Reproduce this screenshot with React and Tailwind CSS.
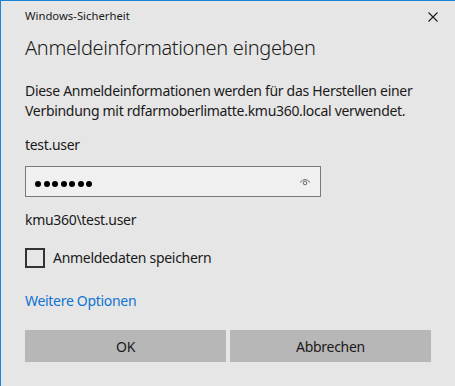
import React from 'react';

const font = { fontFamily: '"Noto Sans", "Open Sans", sans-serif' };

const CloseIcon = () => (
    <svg width="10" height="10" viewBox="0 0 10 10" className="block">
        <path d="M0.5 0.5 L9.5 9.5 M9.5 0.5 L0.5 9.5" stroke="#1a1a1a" strokeWidth="1.1" fill="none" />
    </svg>
);

const EyeIcon = () => (
    <svg width="12" height="8" viewBox="0 0 12 8" className="block">
        <path d="M1 4.5 Q6 -1.5 11 4.5" stroke="#6b6b6b" strokeWidth="1" fill="none" />
        <circle cx="6" cy="5" r="1.8" stroke="#6b6b6b" strokeWidth="1" fill="none" />
    </svg>
);

export default function App() {
    return (
        <div
            className="w-[455px] h-[386px] bg-[#e6e6e6] border-l border-t border-[#1883d7] text-[#1a1a1a] overflow-hidden"
            style={font}
        >
            {/* Titelleiste */}
            <div className="flex justify-between items-start pl-6 pr-[17px] h-[33px]">
                <span className="text-[11.3px] leading-[12px] mt-[9px]">Windows-Sicherheit</span>
                <span className="mt-[11px]">
                    <CloseIcon />
                </span>
            </div>

            <div className="pl-6 pr-6">
                <h1 className="text-[20px] leading-[28px] font-light tracking-[-0.35px]">Anmeldeinformationen eingeben</h1>

                <p className="text-[14px] leading-[20px] mt-[19px] tracking-[-0.3px]">
                    Diese Anmeldeinformationen werden für das Herstellen einer
                    <br />
                    Verbindung mit rdfarmoberlimatte.kmu360.local verwendet.
                </p>

                <div className="text-[14px] leading-[20px] mt-[14px] tracking-[-0.3px]">test.user</div>

                {/* Passwortfeld */}
                <div className="mt-[11px] w-[296px] h-[31px] border border-[#7a7a7a] bg-[#f0f0f0] flex items-center justify-between pl-[9px] pr-[9px]">
                    <div className="flex gap-[2.5px] mt-[5px]">
                        {Array.from({ length: 7 }, (_, i) => (
                            <span key={i} className="w-[6px] h-[6px] rounded-full bg-black block" />
                        ))}
                    </div>
                    <EyeIcon />
                </div>

                <div className="text-[14px] leading-[20px] mt-[13px] tracking-[-0.3px]">kmu360\test.user</div>

                <label className="flex items-center gap-2 mt-[18px]">
                    <span className="w-[20px] h-[20px] border-2 border-[#333333] block" />
                    <span className="text-[14px] leading-[20px] tracking-[-0.3px]">Anmeldedaten speichern</span>
                </label>

                <div className="text-[14px] leading-[20px] mt-[23px] text-[#0f73d2] tracking-[-0.3px]">Weitere Optionen</div>

                {/* Buttons */}
                <div className="flex gap-1 mt-[19px]">
                    <button className="w-[201px] h-[32px] bg-[#b7b7b7] text-[14px] tracking-[-0.3px]">OK</button>
                    <button className="w-[201px] h-[32px] bg-[#b7b7b7] text-[14px] tracking-[-0.3px]">Abbrechen</button>
                </div>
            </div>
        </div>
    );
}
